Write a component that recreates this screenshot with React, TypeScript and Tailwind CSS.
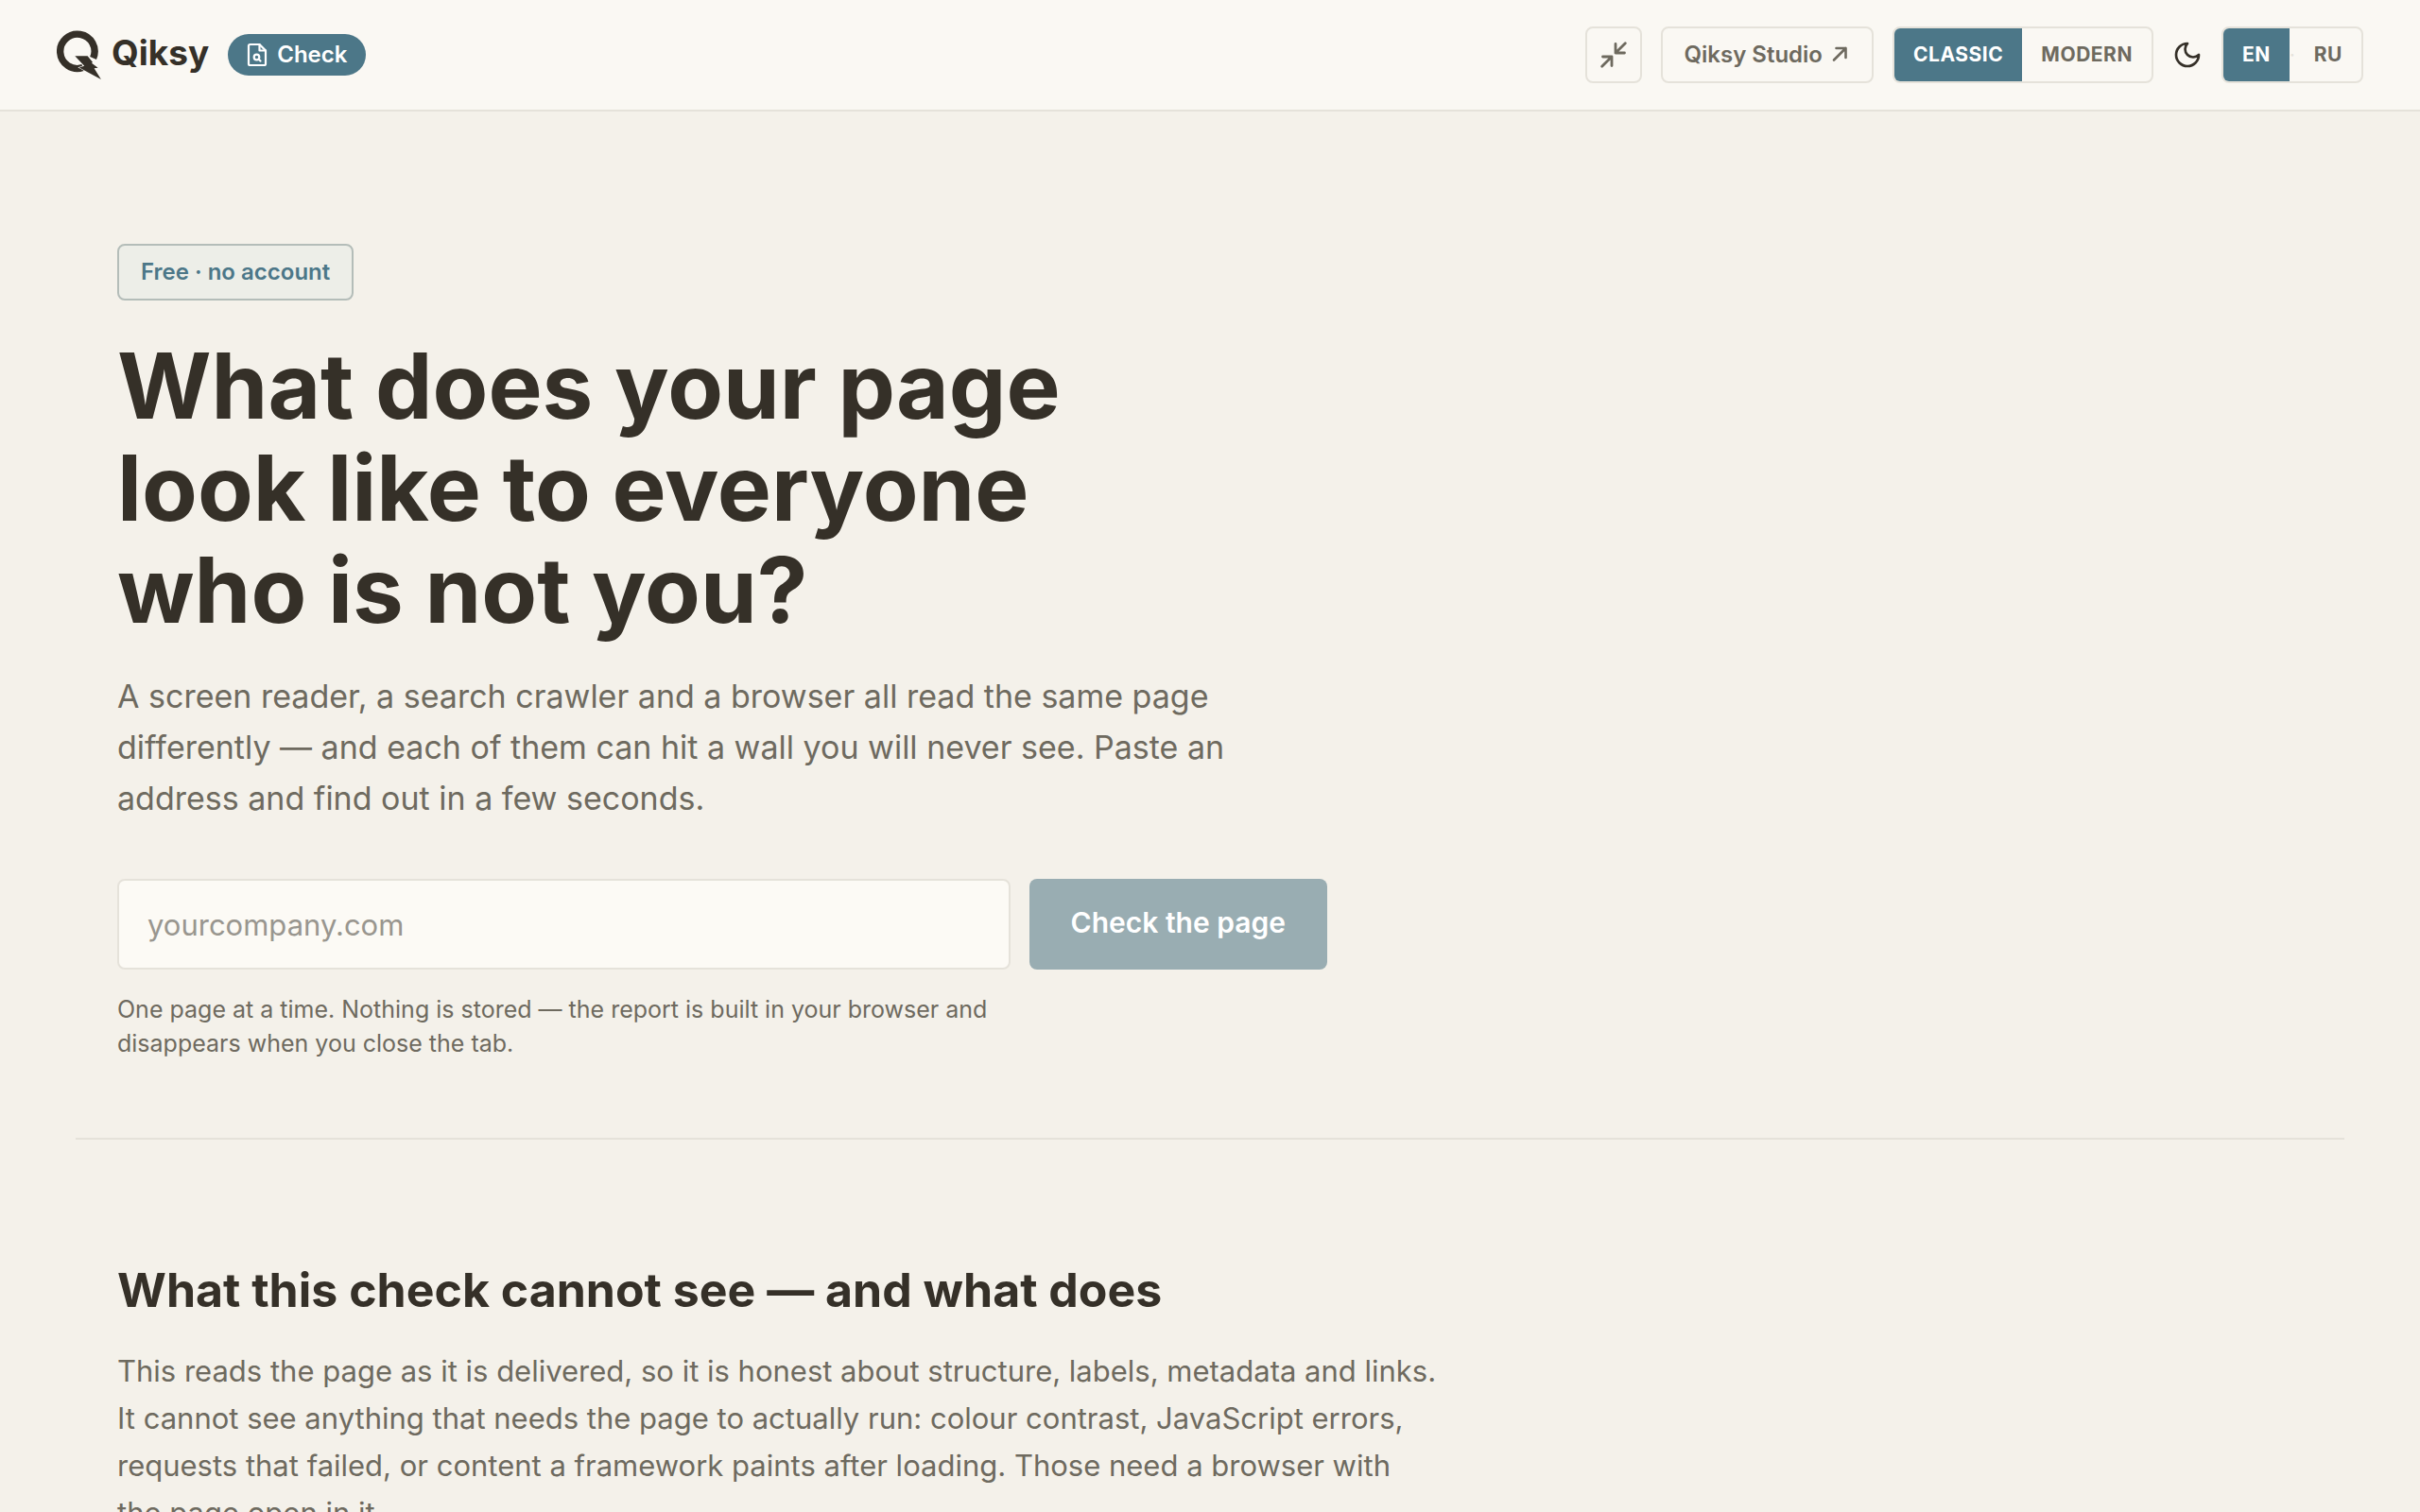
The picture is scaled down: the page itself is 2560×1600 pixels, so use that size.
import clsx from "clsx"
import { useState } from "react"

const style_box = "h-[60px] rounded-lg border-2 border-[#e5e2da] text-[#6e6a5f]"

function LogoMark() {
  return (
    <svg width="48" height="54" viewBox="0 0 48 54" aria-hidden="true">
      <path
        d="M38.600 30.500A18.200 18.200 0 1 0 27.600 40.600"
        fill="none"
        stroke="#353028"
        strokeWidth="7.4"
      />
      <path
        d="M19.300 28.300H32.600L38 34.800L37 35.700L43.600 40.700L39.600 41.300L46.900 52.900L23.800 40.400L29.200 38.800Z"
        fill="#353028"
        stroke="#faf8f3"
        strokeWidth="1.2"
        paintOrder="stroke"
      />
    </svg>
  )
}

function FileSearchIcon() {
  return (
    <svg
      width="22"
      height="26"
      viewBox="0 0 22 26"
      fill="none"
      stroke="currentColor"
      strokeWidth="2.2"
      strokeLinecap="round"
      strokeLinejoin="round"
      aria-hidden="true"
    >
      <path d="M13.500 2H3.500A1.500 1.500 0 0 0 2 3.500V22.500A1.500 1.500 0 0 0 3.500 24H18.500A1.500 1.500 0 0 0 20 22.500V8.500Z" />
      <path d="M13.500 2V8.500H20" />
      <circle cx="10.500" cy="15.500" r="2.800" />
      <path d="M12.700 17.700L14.500 19.500" />
    </svg>
  )
}

function CompactIcon() {
  return (
    <svg
      width="28"
      height="28"
      viewBox="0 0 28 28"
      fill="none"
      stroke="currentColor"
      strokeWidth="2.8"
      strokeLinecap="round"
      strokeLinejoin="round"
      aria-hidden="true"
    >
      <path d="M26.300 1.700L16 12M16 2.500V12H25.500" />
      <path d="M1.700 26.300L12 16M2.500 16H12V25.500" />
    </svg>
  )
}

function ExternalIcon() {
  return (
    <svg
      width="22"
      height="22"
      viewBox="0 0 22 22"
      fill="none"
      stroke="currentColor"
      strokeWidth="2.6"
      strokeLinecap="round"
      strokeLinejoin="round"
      aria-hidden="true"
    >
      <path d="M4 16.500L16.500 4M6.500 4H16.500V14" />
    </svg>
  )
}

function MoonIcon() {
  return (
    <svg
      width="32"
      height="32"
      viewBox="0 0 24 24"
      fill="none"
      stroke="currentColor"
      strokeWidth="2"
      strokeLinecap="round"
      strokeLinejoin="round"
      aria-hidden="true"
    >
      <path d="M12 3a6 6 0 0 0 9 9 9 9 0 1 1-9-9Z" />
    </svg>
  )
}

type TSegment = {
  label: string
  active: boolean
  onClick: () => void
}

function Segment({ label, active, onClick }: TSegment) {
  return (
    <button
      type="button"
      aria-pressed={active}
      onClick={onClick}
      className={clsx(
        "flex items-center px-5 text-[21px] font-bold tracking-wide",
        active && "bg-[#4c7788] text-white"
      )}
    >
      {label}
    </button>
  )
}

function Header() {
  const [theme, setTheme] = useState("CLASSIC")
  const [lang, setLang] = useState("EN")

  return (
    <header className="border-b-2 border-[#e5e2da] bg-[#faf8f3] px-[60px]">
      <div className="flex h-[116px] items-center justify-between">
        <div className="flex items-center gap-5">
          <a href="#" className="flex items-start gap-2.5">
            <LogoMark />
            <span className="text-[37px] leading-[50px] font-bold">Qiksy</span>
          </a>
          <a
            href="#"
            className="flex h-11 items-center gap-2.5 rounded-full bg-[#4c7788] px-5 text-2xl font-semibold text-white"
          >
            <FileSearchIcon />
            Check
          </a>
        </div>
        <div className="flex items-center gap-5">
          <button
            type="button"
            aria-label="Compact view"
            className={clsx(style_box, "flex w-[60px] items-center justify-center")}
          >
            <CompactIcon />
          </button>
          <a
            href="#"
            className={clsx(
              style_box,
              "flex items-center gap-2 px-[22px] text-2xl font-semibold"
            )}
          >
            Qiksy Studio
            <ExternalIcon />
          </a>
          <div className={clsx(style_box, "flex overflow-hidden")}>
            {["CLASSIC", "MODERN"].map((item) => (
              <Segment
                key={item}
                label={item}
                active={theme === item}
                onClick={() => setTheme(item)}
              />
            ))}
          </div>
          <button type="button" aria-label="Dark theme">
            <MoonIcon />
          </button>
          <div className={clsx(style_box, "flex items-stretch overflow-hidden")}>
            <Segment
              label="EN"
              active={lang === "EN"}
              onClick={() => setLang("EN")}
            />
            <span className="flex w-1.5 items-center justify-center text-xl text-[#e5e2da]">
              ·
            </span>
            <Segment
              label="RU"
              active={lang === "RU"}
              onClick={() => setLang("RU")}
            />
          </div>
        </div>
      </div>
    </header>
  )
}

export default function App() {
  return (
    <div className="min-h-screen bg-[#f4f1ea] font-['Inter',sans-serif] text-[#353028]">
      <Header />
      <main className="mx-20">
        <section className="border-b-2 border-[#e5e2da] px-11 pt-[140px] pb-[82px]">
          <p className="inline-flex h-[60px] items-center rounded-lg border-2 border-[#b4bdb9] bg-[#edeee8] px-[23px] text-2xl font-semibold text-[#4c7788]">
            Free · no account
          </p>
          <h1 className="mt-9 text-[96px] leading-[108px] font-bold">
            What does your page
            <br />
            look like to everyone
            <br />
            who is not you?
          </h1>
          <p className="mt-8 text-[34px] leading-[54px] text-[#6e6a5f]">
            A screen reader, a search crawler and a browser all read the same page
            <br />
            differently — and each of them can hit a wall you will never see. Paste an
            <br />
            address and find out in a few seconds.
          </p>
          <form
            className="mt-[58px] flex max-w-[1280px] gap-5"
            onSubmit={(e) => e.preventDefault()}
          >
            <input
              type="text"
              aria-label="Page address"
              placeholder="yourcompany.com"
              className="h-24 min-w-0 flex-1 rounded-lg border-2 border-[#e5e2da] bg-[#fcfaf5] px-[30px] text-[31px] placeholder:text-[#99968f]"
            />
            <button
              type="submit"
              className="h-24 rounded-lg bg-[#99adb2] px-11 pb-1 text-[30px] font-semibold text-white"
            >
              Check the page
            </button>
          </form>
          <p className="mt-6 text-[25px] leading-9 text-[#6e6a5f]">
            One page at a time. Nothing is stored — the report is built in your browser and
            <br />
            disappears when you close the tab.
          </p>
        </section>
        <section className="px-11 pt-32">
          <h2 className="text-[50px] leading-[62px] font-bold">
            What this check cannot see — and what does
          </h2>
          <p className="mt-[30px] text-[31px] leading-[50px] text-[#6e6a5f]">
            This reads the page as it is delivered, so it is honest about structure, labels, metadata and links.
            <br />
            It cannot see anything that needs the page to actually run: colour contrast, JavaScript errors,
            <br />
            requests that failed, or content a framework paints after loading. Those need a browser with
            <br />
            the page open in it.
          </p>
        </section>
      </main>
    </div>
  )
}
